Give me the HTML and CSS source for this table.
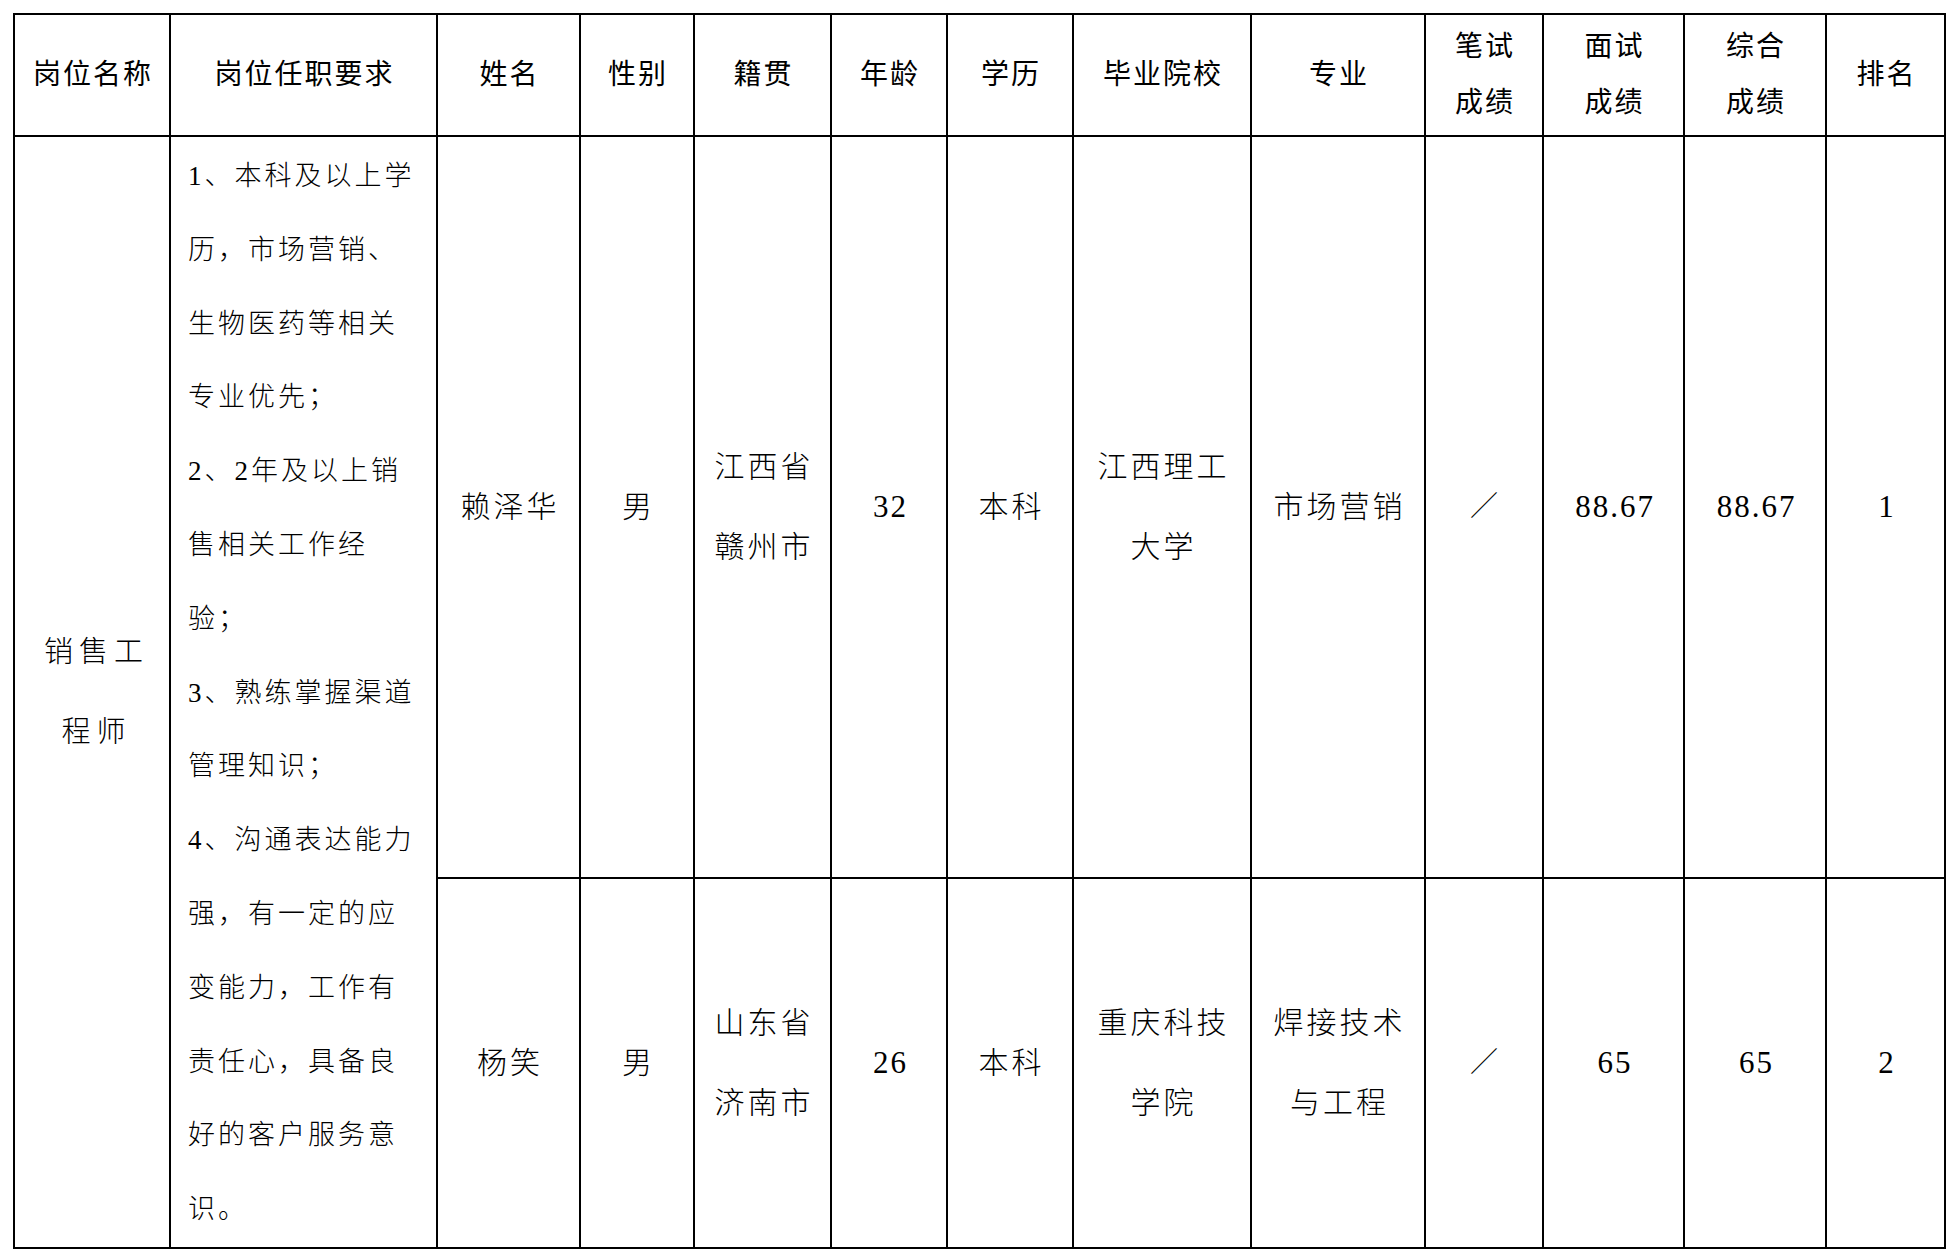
FILE: index.html
```html
<!DOCTYPE html>
<html lang="zh-CN">
<head>
<meta charset="utf-8">
<title>面试成绩</title>
<link rel="stylesheet" href="styles.css">
</head>
<body>
<table class="roster">
  <colgroup>
    <col class="c-job"><col class="c-req"><col class="c-name"><col class="c-sex"><col class="c-origin"><col class="c-age"><col class="c-edu"><col class="c-school"><col class="c-major"><col class="c-written"><col class="c-interview"><col class="c-total"><col class="c-rank">
  </colgroup>
  <thead>
    <tr class="head">
      <th>岗位名称</th>
      <th>岗位任职要求</th>
      <th>姓名</th>
      <th>性别</th>
      <th>籍贯</th>
      <th>年龄</th>
      <th>学历</th>
      <th>毕业院校</th>
      <th>专业</th>
      <th>笔试<br>成绩</th>
      <th>面试<br>成绩</th>
      <th>综合<br>成绩</th>
      <th>排名</th>
    </tr>
  </thead>
  <tbody>
    <tr class="row-a">
      <td class="job" rowspan="2">销售工<br>程师</td>
      <td class="req" rowspan="2">1、本科及以上学<br>历，市场营销、<br>生物医药等相关<br>专业优先；<br>2、2年及以上销<br>售相关工作经<br>验；<br>3、熟练掌握渠道<br>管理知识；<br>4、沟通表达能力<br>强，有一定的应<br>变能力，工作有<br>责任心，具备良<br>好的客户服务意<br>识。</td>
      <td class="data">赖泽华</td>
      <td class="data">男</td>
      <td class="data">江西省<br>赣州市</td>
      <td class="data num">32</td>
      <td class="data">本科</td>
      <td class="data">江西理工<br>大学</td>
      <td class="data">市场营销</td>
      <td class="data slash">／</td>
      <td class="data num">88.67</td>
      <td class="data num">88.67</td>
      <td class="data num">1</td>
    </tr>
    <tr class="row-b">
      <td class="data">杨笑</td>
      <td class="data">男</td>
      <td class="data">山东省<br>济南市</td>
      <td class="data num">26</td>
      <td class="data">本科</td>
      <td class="data">重庆科技<br>学院</td>
      <td class="data">焊接技术<br>与工程</td>
      <td class="data slash">／</td>
      <td class="data num">65</td>
      <td class="data num">65</td>
      <td class="data num">2</td>
    </tr>
  </tbody>
</table>
</body>
</html>
```
FILE: styles.css
```css
html, body {
  margin: 0;
  background: #ffffff;
}
body {
  padding: 13px;
  color: #000000;
  font-family: "Liberation Serif", "Noto Sans CJK SC", serif;
}
.roster {
  border-collapse: collapse;
  table-layout: fixed;
  width: 1933px;
}
.c-job { width: 156px; }
.c-req { width: 267px; }
.c-name { width: 143px; }
.c-sex { width: 114px; }
.c-origin { width: 137px; }
.c-age { width: 116px; }
.c-edu { width: 126px; }
.c-school { width: 178px; }
.c-major { width: 174px; }
.c-written { width: 118px; }
.c-interview { width: 141px; }
.c-total { width: 142px; }
.c-rank { width: 119px; }

.roster th,
.roster td {
  border: 2px solid #000000;
  padding: 0;
  text-align: center;
  vertical-align: middle;
  white-space: nowrap;
}
.roster th {
  font-size: 28px;
  font-weight: 400;
  letter-spacing: 2px;
  line-height: 56px;
  padding-left: 2px;
}
.head { height: 122px; }
.row-a { height: 742px; }
.row-b { height: 370px; }

.roster td.job {
  font-size: 29px;
  font-weight: 300;
  letter-spacing: 6px;
  line-height: 80px;
  padding-left: 9px;
}
.roster td.req {
  text-align: left;
  vertical-align: top;
  padding: 3px 0 0 17px;
  font-size: 27px;
  font-weight: 300;
  letter-spacing: 3px;
  line-height: 73.8px;
}
.data {
  font-size: 30px;
  font-weight: 300;
  letter-spacing: 3px;
  line-height: 80px;
}
.roster td.data { padding-left: 3px; }
.roster td.num {
  font-family: "Liberation Serif", serif;
  font-weight: 400;
  font-size: 31px;
  letter-spacing: 2px;
}
.slash {
  font-size: 28px;
}
```
